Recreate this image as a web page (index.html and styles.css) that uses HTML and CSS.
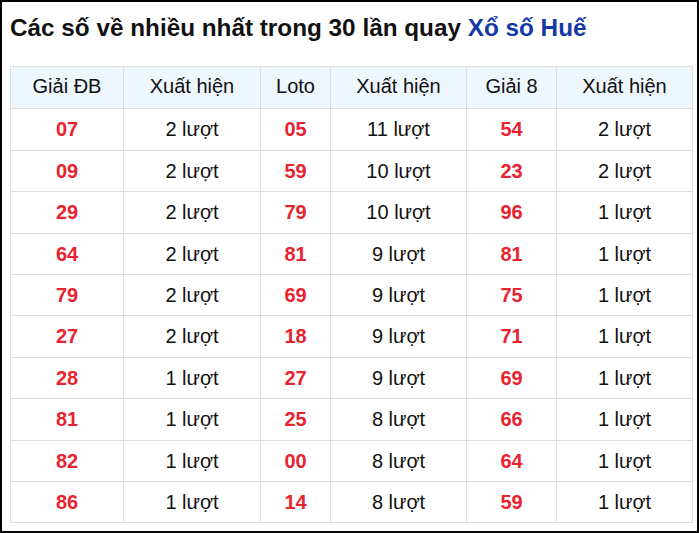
FILE: index.html
```html
<!DOCTYPE html>
<html>
<head>
<meta charset="utf-8">
<link rel="stylesheet" href="styles.css">
</head>
<body>
<div class="box">
  <h2 class="title">Các số về nhiều nhất trong 30 lần quay <span class="blue">Xổ số Huế</span></h2>
  <table class="stats">
    <colgroup>
      <col class="c1"><col class="c2"><col class="c3"><col class="c4"><col class="c5"><col class="c6">
    </colgroup>
    <thead>
      <tr><th>Giải ĐB</th><th>Xuất hiện</th><th>Loto</th><th>Xuất hiện</th><th>Giải 8</th><th>Xuất hiện</th></tr>
    </thead>
    <tbody>
      <tr><td class="num">07</td><td>2 lượt</td><td class="num">05</td><td>11 lượt</td><td class="num">54</td><td>2 lượt</td></tr>
      <tr><td class="num">09</td><td>2 lượt</td><td class="num">59</td><td>10 lượt</td><td class="num">23</td><td>2 lượt</td></tr>
      <tr><td class="num">29</td><td>2 lượt</td><td class="num">79</td><td>10 lượt</td><td class="num">96</td><td>1 lượt</td></tr>
      <tr><td class="num">64</td><td>2 lượt</td><td class="num">81</td><td>9 lượt</td><td class="num">81</td><td>1 lượt</td></tr>
      <tr><td class="num">79</td><td>2 lượt</td><td class="num">69</td><td>9 lượt</td><td class="num">75</td><td>1 lượt</td></tr>
      <tr><td class="num">27</td><td>2 lượt</td><td class="num">18</td><td>9 lượt</td><td class="num">71</td><td>1 lượt</td></tr>
      <tr><td class="num">28</td><td>1 lượt</td><td class="num">27</td><td>9 lượt</td><td class="num">69</td><td>1 lượt</td></tr>
      <tr><td class="num">81</td><td>1 lượt</td><td class="num">25</td><td>8 lượt</td><td class="num">66</td><td>1 lượt</td></tr>
      <tr><td class="num">82</td><td>1 lượt</td><td class="num">00</td><td>8 lượt</td><td class="num">64</td><td>1 lượt</td></tr>
      <tr><td class="num">86</td><td>1 lượt</td><td class="num">14</td><td>8 lượt</td><td class="num">59</td><td>1 lượt</td></tr>
    </tbody>
  </table>
</div>
</body>
</html>
```
FILE: styles.css
```css
html, body {
  margin: 0;
  padding: 0;
  background: #fff;
}
body {
  font-family: "Liberation Sans", Arial, sans-serif;
  color: #111;
}
.box {
  box-sizing: border-box;
  width: 699px;
  height: 533px;
  border: 2px solid #000;
  padding: 0 5px 0 8px;
}
.title {
  font-size: 24.3px;
  font-weight: bold;
  margin: 0;
  padding: 12px 0 0 0;
  height: 52px;
  line-height: 28px;
  color: #111;
}
.blue {
  color: #1438a8;
}
.stats {
  border-collapse: collapse;
  width: 682px;
  table-layout: fixed;
  font-size: 20px;
}
.c1 { width: 113px; }
.c2 { width: 137px; }
.c3 { width: 70px; }
.c4 { width: 136px; }
.c5 { width: 90px; }
.c6 { width: 136px; }
.stats th, .stats td {
  border: 1px solid #ddd;
  text-align: center;
  padding: 9px 0;
  line-height: 22.4px;
}
.stats th {
  background: #eef6fe;
  font-weight: normal;
  color: #111;
  padding: 8px 0 11px 0;
}
.stats td {
  color: #111;
}
.stats td.num {
  color: #e8232f;
  font-weight: bold;
}
```
